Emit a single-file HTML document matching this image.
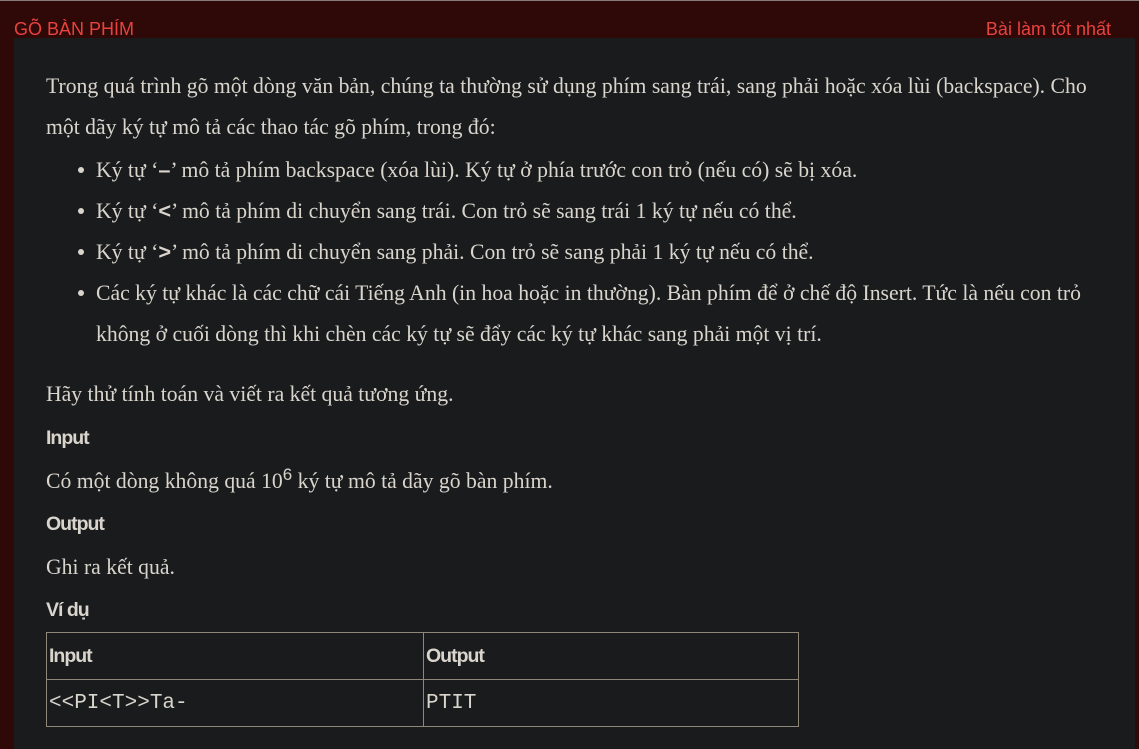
<!DOCTYPE html>
<html><head><meta charset="utf-8"><style>
html,body{margin:0;padding:0}
body{width:1139px;height:749px;background:#2f0808;position:relative;overflow:hidden;font-family:"Liberation Serif",serif;color:#d9d5cd}
.top{position:absolute;top:0;left:0;right:0;height:1px;background:#8a7a7a}
.h{position:absolute;top:19px;font-family:"Liberation Sans",sans-serif;font-size:18px;color:#e8433f;line-height:20px}
.panel{position:absolute;left:14px;top:38px;width:1121px;height:711px;background:#1a1b1d}
.t{position:absolute;font-size:21.7px;white-space:nowrap;line-height:22px}
.b{position:absolute;font-family:"Liberation Sans",sans-serif;font-weight:bold;font-size:19.5px;letter-spacing:-1px;line-height:20px}
.dot{position:absolute;width:6px;height:6px;border-radius:50%;background:#d9d5cd}
table{position:absolute;left:46px;top:632px;border-collapse:collapse}
td{border:1px solid #8f8778;padding:0 2px;height:46px;vertical-align:middle}
td.h1{font-family:"Liberation Sans",sans-serif;font-weight:bold;font-size:19.5px;letter-spacing:-1px}
td.m{font-family:"Liberation Mono",monospace;font-size:21px}
</style></head><body>
<div class="top"></div>
<div class="h" style="left:14px">GÕ BÀN PHÍM</div>
<div class="h" style="right:28px">Bài làm tốt nhất</div>
<div class="panel"></div>
<div class="t" style="left:46px;top:75px">Trong quá trình gõ một dòng văn bản, chúng ta thường sử dụng phím sang trái, sang phải hoặc xóa lùi (backspace). Cho</div>
<div class="t" style="left:46px;top:116px">một dãy ký tự mô tả các thao tác gõ phím, trong đó:</div>
<div class="dot" style="left:78px;top:167px"></div>
<div class="t" style="left:96px;top:159px">Ký tự ‘<b style="font-family:'Liberation Sans'">–</b>’ mô tả phím backspace (xóa lùi). Ký tự ở phía trước con trỏ (nếu có) sẽ bị xóa.</div>
<div class="dot" style="left:78px;top:208px"></div>
<div class="t" style="left:96px;top:200px">Ký tự ‘<b style="font-family:'Liberation Sans'">&lt;</b>’ mô tả phím di chuyển sang trái. Con trỏ sẽ sang trái 1 ký tự nếu có thể.</div>
<div class="dot" style="left:78px;top:249px"></div>
<div class="t" style="left:96px;top:241px">Ký tự ‘<b style="font-family:'Liberation Sans'">&gt;</b>’ mô tả phím di chuyển sang phải. Con trỏ sẽ sang phải 1 ký tự nếu có thể.</div>
<div class="dot" style="left:78px;top:290px"></div>
<div class="t" style="left:96px;top:282px">Các ký tự khác là các chữ cái Tiếng Anh (in hoa hoặc in thường). Bàn phím để ở chế độ Insert. Tức là nếu con trỏ</div>
<div class="t" style="left:96px;top:323px">không ở cuối dòng thì khi chèn các ký tự sẽ đẩy các ký tự khác sang phải một vị trí.</div>
<div class="t" style="left:46px;top:383px">Hãy thử tính toán và viết ra kết quả tương ứng.</div>
<div class="b" style="left:46px;top:428px">Input</div>
<div class="t" style="left:46px;top:470px">Có một dòng không quá 10<sup style="font-size:17px;line-height:0;font-family:'Liberation Sans'">6</sup> ký tự mô tả dãy gõ bàn phím.</div>
<div class="b" style="left:46px;top:514px">Output</div>
<div class="t" style="left:46px;top:556px">Ghi ra kết quả.</div>
<div class="b" style="left:46px;top:600px">Ví dụ</div>
<table>
<tr><td class="h1" style="width:372px">Input</td><td class="h1" style="width:370px">Output</td></tr>
<tr><td class="m">&lt;&lt;PI&lt;T&gt;&gt;Ta-</td><td class="m">PTIT</td></tr>
</table>
</body></html>
